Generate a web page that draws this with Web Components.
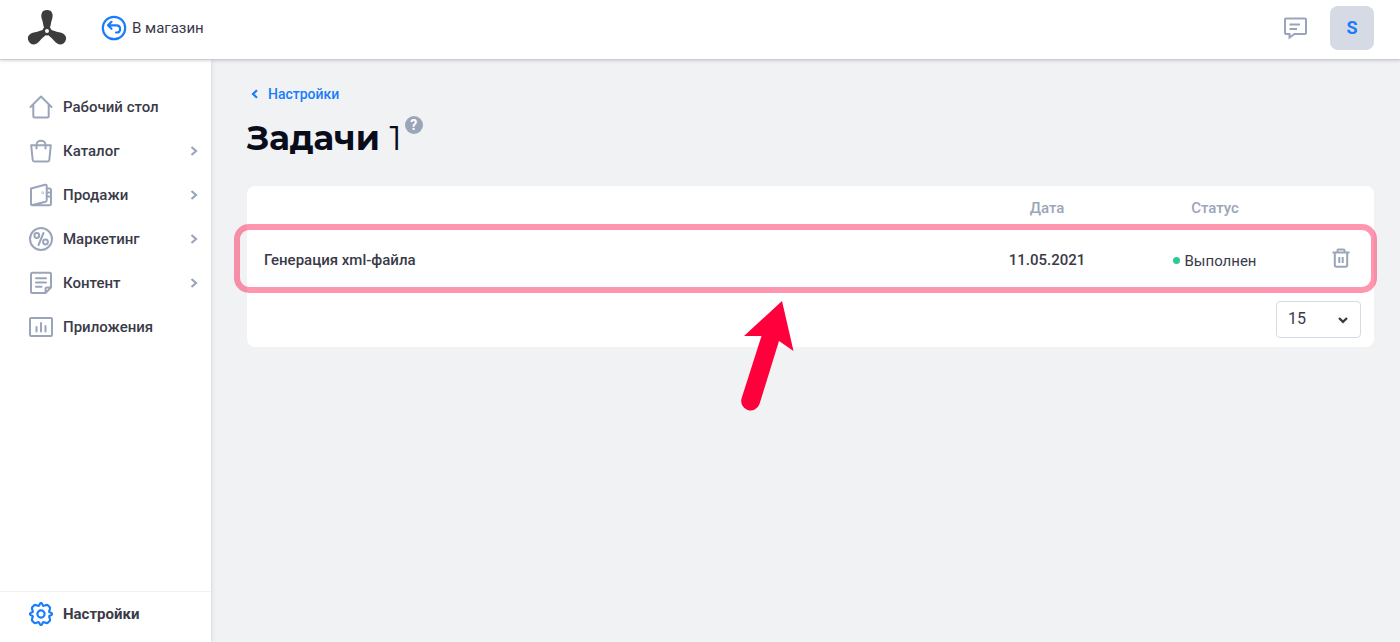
<!DOCTYPE html>
<html lang="ru">
<head>
<meta charset="utf-8">
<meta name="viewport" content="width=device-width, initial-scale=1">
<title>Задачи</title>
<style>
    :root {
        --blue: #1a7cfa;
        --text: #3a3a49;
        --muted: #9ba5b9;
        --line: #d5dae4;
        --page: #f1f2f4;
    }

    body {
        margin: 0;
        background: var(--page);
        color: var(--text);
        font: 15px/20px Roboto, "Liberation Sans", sans-serif;
    }
</style>
</head>
<body>

<admin-layout>
    <admin-header slot="header">
        <a href="#shop">В магазин</a>
    </admin-header>

    <side-nav slot="nav">
        <nav-item data-icon="home" data-href="#home">Рабочий стол</nav-item>
        <nav-item data-icon="bag" data-href="#catalog" data-expandable>Каталог</nav-item>
        <nav-item data-icon="wallet" data-href="#sales" data-expandable>Продажи</nav-item>
        <nav-item data-icon="percent" data-href="#marketing" data-expandable>Маркетинг</nav-item>
        <nav-item data-icon="note" data-href="#content" data-expandable>Контент</nav-item>
        <nav-item data-icon="chart" data-href="#apps">Приложения</nav-item>
        <nav-item slot="footer" data-icon="gear" data-href="#settings" data-active>Настройки</nav-item>
    </side-nav>

    <page-title data-count="1">
        <a slot="back" href="#settings">Настройки</a>
        Задачи
    </page-title>
    <task-table></task-table>
</admin-layout>

<script>
const blade = "M20 22C16 20 16.6 15 15.2 11C13.2 6 14.5 1 20 1S26.8 6 24.8 11C23.4 15 24 20 20 22Z";

const icons = {
    logo: `<svg width="40" height="38" viewBox="0 0 40 38" fill="#3c3c3c">
        <path d="${blade}"/>
        <path d="${blade}" transform="rotate(120 20 22)"/>
        <path d="${blade}" transform="rotate(240 20 22)"/>
        <circle cx="20" cy="22" r="4.5"/>
        <circle cx="20" cy="22" r="2" fill="#fff"/>
    </svg>`,
    back: `<svg width="26" height="26" viewBox="0 0 26 26" fill="none" stroke="currentColor" stroke-width="2.2">
        <circle cx="13" cy="13" r="11.2"/>
        <path d="M10.5 6.8L7 10.3L10.5 13.8M7.2 10.3H15.500C20.3 10.3 20.3 17.500 15.5 17.500H15" stroke-linecap="round" stroke-linejoin="round"/>
    </svg>`,
    home: `<svg width="24" height="24" viewBox="0 0 24 24" fill="none" stroke="currentColor" stroke-width="2" stroke-linecap="round" stroke-linejoin="round">
        <path d="M1.5 12L12 1.5L22.5 12M4.3 10V21C4.3 22 4.8 22.5 5.8 22.5H18.2C19.2 22.5 19.7 22 19.7 21V10"/>
    </svg>`,
    bag: `<svg width="24" height="24" viewBox="0 0 24 24" fill="none" stroke="currentColor" stroke-width="2" stroke-linecap="round" stroke-linejoin="round">
        <path d="M2.2 6.3H21.8L20.3 21C20.2 22 19.7 22.5 18.8 22.5H5.2C4.3 22.5 3.8 22 3.7 21ZM7.5 9.500V6C7.5 .3 16.5 .3 16.5 6V9.5"/>
    </svg>`,
    wallet: `<svg width="24" height="24" viewBox="0 0 24 24" fill="none" stroke="currentColor" stroke-width="2" stroke-linecap="round" stroke-linejoin="round">
        <path d="M2 5.500L16 1.800C17 1.6 17.7 2 17.7 3V17C17.7 18 17.2 18.5 16.5 18.7L3.5 22C2.5 22.2 2 21.7 2 21ZM3 22.3H20.5C21.5 22.3 22 21.8 22 21V13.5M18 5.500H20.5C21.5 5.500 22 6 22 7V13.5H18M18 9.5H22"/>
        <circle cx="13.8" cy="9.8" r=".3"/>
    </svg>`,
    percent: `<svg width="24" height="24" viewBox="0 0 24 24" fill="none" stroke="currentColor" stroke-width="2" stroke-linecap="round">
        <circle cx="12" cy="12" r="11"/>
        <circle cx="7.8" cy="8.5" r="2.4"/>
        <circle cx="16.5" cy="15" r="2.4"/>
        <path d="M14.5 6L9.5 18"/>
    </svg>`,
    note: `<svg width="24" height="24" viewBox="0 0 24 24" fill="none" stroke="currentColor" stroke-width="2" stroke-linecap="round" stroke-linejoin="round">
        <path d="M3.5 1.7H20.5C21.5 1.7 22 2.2 22 3.2V16.5L16.5 22H3.5C2.5 22 2 21.5 2 20.5V3.2C2 2.2 2.5 1.7 3.5 1.7ZM16.5 22V18C16.5 17 17 16.5 18 16.5H22M7 7.2H17M7 11.5H17M7 15.8H12.5"/>
    </svg>`,
    chart: `<svg width="24" height="24" viewBox="0 0 24 24" fill="none" stroke="currentColor" stroke-width="2" stroke-linecap="round" stroke-linejoin="round">
        <rect x="1" y="3" width="22" height="18" rx="1"/>
        <path d="M7.5 12V16.5M12 8V16.5M16.5 11V16.5"/>
    </svg>`,
    gear: `<svg width="24" height="24" viewBox="0 0 24 24" fill="none" stroke="currentColor" stroke-width="2.2" stroke-linejoin="round">
        <path d="M9.8 3.8C10.6 3.5 10.5 1 12 1S13.4 3.5 14.2 3.8S17.8 2.2 18.8 3.2L20.8 5.2C21.8 6.2 19.9 8.9 20.2 9.8S23 10.5 23 12S20.5 13.4 20.2 14.2S21.8 17.8 20.8 18.8L18.8 20.8C17.8 21.8 15.1 19.9 14.2 20.2S13.5 23 12 23S10.6 20.5 9.8 20.2S6.2 21.8 5.2 20.8L3.2 18.8C2.2 17.8 4.1 15.1 3.8 14.2S1 13.5 1 12S3.5 10.6 3.8 9.8S2.2 6.2 3.2 5.2L5.2 3.2C6.2 2.2 8.9 4.1 9.8 3.8Z"/>
        <circle cx="12" cy="12" r="3.6"/>
    </svg>`,
    chat: `<svg width="24" height="24" viewBox="0 0 24 24" fill="none" stroke="currentColor" stroke-width="2">
        <path d="M3 2.5H22C22.5 2.5 23 3 23 3.5V17C23 17.5 22.500 18 22 18H11.5L6.5 21.500V18H3C2.5 18 2 17.5 2 17V3.5C2 3 2.5 2.5 3 2.5Z"/>
        <path d="M6.5 8.500H17M6.5 13H14"/>
    </svg>`,
    trash: `<svg width="20" height="20" viewBox="0 0 20 20" fill="none" stroke="currentColor" stroke-width="2">
        <path d="M1.500 4.5H18.5M3.8 4.5V17C3.8 18 4.5 18.7 5.5 18.7H14.5C15.5 18.7 16.2 18 16.2 17V4.5M6.5 4V2.5C6.5 1.8 7 1.5 7.5 1.5H12.5C13 1.5 13.5 1.8 13.5 2.5V4M8.3 9V15M11.7 9V15"/>
    </svg>`,
    right: `<svg width="8" height="10" viewBox="0 0 8 10" fill="none" stroke="currentColor" stroke-width="2.2">
        <path d="M1.5 1L6 5L1.5 9"/>
    </svg>`,
    left: `<svg width="8" height="10" viewBox="0 0 8 10" fill="none" stroke="currentColor" stroke-width="2.2">
        <path d="M6 1.2L2 5L6 8.8"/>
    </svg>`,
    down: `<svg width="10" height="8" viewBox="0 0 10 8" fill="none" stroke="currentColor" stroke-width="2.4">
        <path d="M1 2L5 5.8L9 2"/>
    </svg>`
};

// attaches an open shadow root with the given markup
function render(element, html) {
    const template = document.createElement("template");
    template.innerHTML = html;
    element.attachShadow({ mode: "open" });
    element.shadowRoot.appendChild(template.content.cloneNode(true));
}

class UiIcon extends HTMLElement {
    connectedCallback() {
        if (this.shadowRoot) return;
        render(this, `
            <style>
                :host { display: inline-flex; flex: none; }
                svg { display: block; }
            </style>
            ${icons[this.dataset.name]}
        `);
    }
}

class AdminLayout extends HTMLElement {
    constructor() {
        super();
        render(this, `
            <style>
                :host {
                    display: grid;
                    grid-template: auto 1fr / 211px 1fr;
                    min-height: 100vh;
                }
                slot[name="header"] { display: block; grid-column: 1 / -1; position: relative; z-index: 1; }
                slot[name="nav"] { display: grid; }
                main { min-width: 0; padding: 24px 26px 24px 36px; }
            </style>
            <slot name="header"></slot>
            <slot name="nav"></slot>
            <main><slot></slot></main>
        `);
    }
}

class AdminHeader extends HTMLElement {
    constructor() {
        super();
        render(this, `
            <style>
                :host {
                    display: flex;
                    align-items: center;
                    box-sizing: border-box;
                    min-height: 60px;
                    padding: 0 26px 3px 27px;
                    background: #fff;
                    border-bottom: 1px solid #c9ccd4;
                    box-shadow: 0 1px 3px rgba(60, 65, 80, .2);
                }
                .shop { display: flex; align-items: center; gap: 5px; margin-left: 34px; color: var(--blue); }
                ::slotted(a) { color: var(--text); text-decoration: none; }
                .tools { display: flex; align-items: center; gap: 23px; margin-left: auto; }
                button { border: 0; padding: 0; background: none; color: var(--muted); cursor: pointer; }
                button.chat { display: flex; }
                button.avatar {
                    width: 44px;
                    height: 44px;
                    border-radius: 8px;
                    background: var(--line);
                    color: var(--blue);
                    font: 700 18px/24px Roboto, sans-serif;
                }
            </style>
            <ui-icon data-name="logo"></ui-icon>
            <div class="shop"><ui-icon data-name="back"></ui-icon><slot></slot></div>
            <div class="tools">
                <button type="button" class="chat" aria-label="Сообщения"><ui-icon data-name="chat"></ui-icon></button>
                <button type="button" class="avatar">S</button>
            </div>
        `);
    }
}

class SideNav extends HTMLElement {
    constructor() {
        super();
        render(this, `
            <style>
                :host {
                    display: flex;
                    flex-direction: column;
                    justify-content: space-between;
                    background: #fff;
                    box-shadow: 0 0 4px rgba(80, 90, 120, .25);
                }
                nav { padding-top: 25px; }
                footer { padding-bottom: 6px; border-top: 1px solid #f0f1f3; }
            </style>
            <nav><slot></slot></nav>
            <footer><slot name="footer"></slot></footer>
        `);
    }
}

class NavItem extends HTMLElement {
    connectedCallback() {
        if (this.shadowRoot) return;
        render(this, `
            <style>
                :host { display: block; }
                a {
                    display: flex;
                    align-items: center;
                    gap: 10px;
                    height: 44px;
                    padding: 0 13px 0 29px;
                    color: var(--text);
                    font-size: 15px;
                    font-weight: 500;
                    text-decoration: none;
                }
                :host([data-active]) a { font-weight: 700; }
                ui-icon { color: var(--muted); }
                :host([data-active]) ui-icon { color: var(--blue); }
                .arrow { margin-left: auto; }
            </style>
            <a href="${this.dataset.href}">
                <ui-icon data-name="${this.dataset.icon}"></ui-icon>
                <span><slot></slot></span>
                ${this.hasAttribute("data-expandable") ? `<ui-icon class="arrow" data-name="right"></ui-icon>` : ""}
            </a>
        `);
    }
}

class PageTitle extends HTMLElement {
    connectedCallback() {
        if (this.shadowRoot) return;
        render(this, `
            <style>
                :host { display: block; }
                .back { display: flex; align-items: center; gap: 9px; padding-left: 4px; color: var(--blue); }
                ::slotted(a) { color: var(--blue); font-size: 14px; font-weight: 500; text-decoration: none; }
                .heading { display: flex; align-items: flex-start; gap: 3px; margin: 12px 0 26px; }
                h1 {
                    margin: 0;
                    color: #090d1b;
                    font: 700 34px/44px Montserrat, Inter, sans-serif;
                }
                h1 span { font-weight: 400; }
                button {
                    width: 18px;
                    height: 18px;
                    padding: 0;
                    border: 0;
                    border-radius: 50%;
                    background: var(--muted);
                    color: #fff;
                    font: 700 14px/18px Roboto, sans-serif;
                    cursor: pointer;
                }
            </style>
            <div class="back"><ui-icon data-name="left"></ui-icon><slot name="back"></slot></div>
            <div class="heading">
                <h1><slot></slot> <span>${this.dataset.count}</span></h1>
                <button type="button">?</button>
            </div>
        `);
    }
}

class StatusBadge extends HTMLElement {
    constructor() {
        super();
        render(this, `
            <style>
                :host { display: inline-flex; align-items: center; gap: 4px; font-weight: 400; }
                i { width: 7px; height: 7px; border-radius: 50%; background: #2dca96; }
            </style>
            <i></i><slot></slot>
        `);
    }
}

// frame around the closest positioned ancestor, with an arrow pointing at it
class RowPointer extends HTMLElement {
    constructor() {
        super();
        render(this, `
            <style>
                :host {
                    position: absolute;
                    inset: -6px -3px -3px -13px;
                    box-sizing: border-box;
                    border: 6px solid rgba(255, 0, 60, .41);
                    border-radius: 15px;
                    pointer-events: none;
                }
                svg { position: absolute; top: calc(100% + 13px); left: 44%; }
            </style>
            <svg width="58" height="112" viewBox="-1 0 58 112">
                <path d="M43 1L54.5 51L40 41L20.5 104A9.3 9.3 0 0 1 2.7 98L22.5 36H5Z" fill="#ff003c"/>
            </svg>
        `);
    }
}

class PageSize extends HTMLElement {
    constructor() {
        super();
        render(this, `
            <style>
                :host { display: grid; align-items: center; width: 85px; }
                select, ui-icon { grid-area: 1 / 1; }
                select {
                    appearance: none;
                    width: 100%;
                    height: 37px;
                    padding: 0 28px 2px 11px;
                    border: 1px solid var(--line);
                    border-radius: 4px;
                    background: #fff;
                    color: var(--text);
                    font: 16px/20px Roboto, sans-serif;
                }
                ui-icon { justify-self: end; margin-right: 13px; pointer-events: none; }
            </style>
            <select aria-label="Строк на странице">
                <option>15</option>
                <option>30</option>
                <option>50</option>
            </select>
            <ui-icon data-name="down"></ui-icon>
        `);
    }
}

class TaskTable extends HTMLElement {
    constructor() {
        super();
        render(this, `
            <style>
                :host { display: block; background: #fff; border-radius: 8px; }
                table { width: 100%; border-collapse: collapse; table-layout: fixed; }
                th, td { padding: 0; font-weight: 500; text-align: center; }
                th { height: 44px; color: var(--muted); }
                td { height: 60px; }
                td:first-child { padding-left: 17px; text-align: left; }
                .date, .status { width: 168px; }
                .action { width: 75px; }
                td:last-child { padding-left: 9px; }
                tbody tr { position: relative; }
                td button { display: inline-flex; padding: 0; border: 0; background: none; color: var(--muted); cursor: pointer; }
                footer { display: flex; justify-content: flex-end; padding: 11px 13px 9px; }
            </style>
            <table>
                <thead>
                    <tr>
                        <th></th>
                        <th class="date" scope="col">Дата</th>
                        <th class="status" scope="col">Статус</th>
                        <th class="action"></th>
                    </tr>
                </thead>
                <tbody>
                    <tr>
                        <td>Генерация xml-файла<row-pointer></row-pointer></td>
                        <td>11.05.2021</td>
                        <td><status-badge>Выполнен</status-badge></td>
                        <td><button type="button" aria-label="Удалить"><ui-icon data-name="trash"></ui-icon></button></td>
                    </tr>
                </tbody>
            </table>
            <footer><page-size></page-size></footer>
        `);
    }
}

customElements.define("ui-icon", UiIcon);
customElements.define("admin-layout", AdminLayout);
customElements.define("admin-header", AdminHeader);
customElements.define("side-nav", SideNav);
customElements.define("nav-item", NavItem);
customElements.define("page-title", PageTitle);
customElements.define("status-badge", StatusBadge);
customElements.define("row-pointer", RowPointer);
customElements.define("page-size", PageSize);
customElements.define("task-table", TaskTable);
</script>
</body>
</html>
